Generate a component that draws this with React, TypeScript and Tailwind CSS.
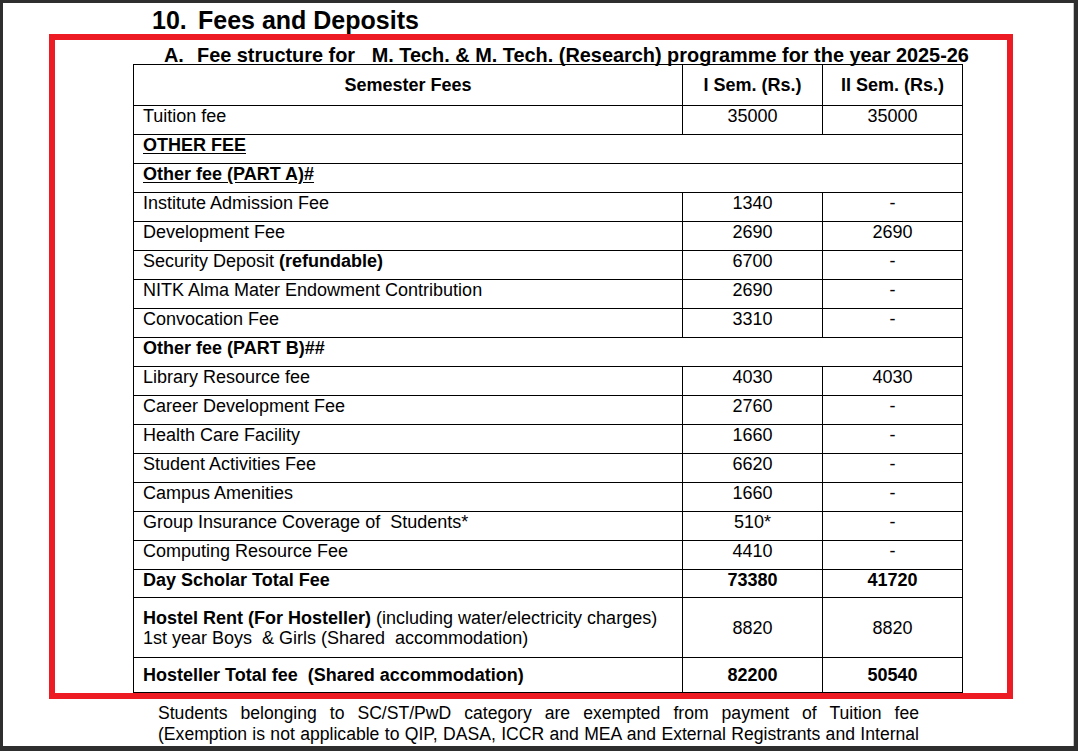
import React from "react";

type Row = {
  label: React.ReactNode;
  a?: string;
  b?: string;
  span?: boolean;
  h: string;
  center?: boolean;
  bold?: boolean;
};

const rows: Row[] = [
  { label: "Tuition fee", a: "35000", b: "35000", h: "h-[29px]" },
  { label: <span className="font-bold underline underline-offset-[2px]">OTHER FEE</span>, span: true, h: "h-[29px]" },
  { label: <span className="font-bold underline underline-offset-[2px]">Other fee (PART A)#</span>, span: true, h: "h-[29px]" },
  { label: "Institute Admission Fee", a: "1340", b: "-", h: "h-[29px]" },
  { label: "Development Fee", a: "2690", b: "2690", h: "h-[29px]" },
  {
    label: (
      <>
        Security Deposit <span className="font-bold">(refundable)</span>
      </>
    ),
    a: "6700",
    b: "-",
    h: "h-[29px]",
  },
  { label: "NITK Alma Mater Endowment Contribution", a: "2690", b: "-", h: "h-[29px]" },
  { label: "Convocation Fee", a: "3310", b: "-", h: "h-[29px]" },
  { label: <span className="font-bold">Other fee (PART B)##</span>, span: true, h: "h-[29px]" },
  { label: "Library Resource fee", a: "4030", b: "4030", h: "h-[29px]" },
  { label: "Career Development Fee", a: "2760", b: "-", h: "h-[29px]" },
  { label: "Health Care Facility", a: "1660", b: "-", h: "h-[29px]" },
  { label: "Student Activities Fee", a: "6620", b: "-", h: "h-[29px]" },
  { label: "Campus Amenities", a: "1660", b: "-", h: "h-[29px]" },
  { label: "Group Insurance Coverage of  Students*", a: "510*", b: "-", h: "h-[29px]" },
  { label: "Computing Resource Fee", a: "4410", b: "-", h: "h-[29px]" },
  { label: "Day Scholar Total Fee", a: "73380", b: "41720", h: "h-[28px]", bold: true },
  {
    label: (
      <>
        <span className="font-bold">Hostel Rent (For Hosteller)</span> (including water/electricity charges)
        <br />
        1st year Boys &nbsp;&amp; Girls (Shared &nbsp;accommodation)
      </>
    ),
    a: "8820",
    b: "8820",
    h: "h-[60px]",
    center: true,
  },
  {
    label: "Hosteller Total fee  (Shared accommodation)",
    a: "82200",
    b: "50540",
    h: "h-[35px]",
    center: true,
    bold: true,
  },
];

function TableRow({ r }: { r: Row }) {
  const align = r.center ? "items-center" : "items-start";
  if (r.span) {
    return (
      <div className={`flex ${r.h} border-b border-black ${align}`}>
        <div className="pl-[9px] leading-[20px] whitespace-pre">{r.label}</div>
      </div>
    );
  }
  return (
    <div className={`flex ${r.h} border-b border-black ${r.bold ? "font-bold" : ""}`}>
      <div className={`flex ${align} w-[549px] border-r border-black pl-[9px] leading-[20px] whitespace-pre`}>
        <div>{r.label}</div>
      </div>
      <div className={`flex ${align} justify-center w-[140px] border-r border-black leading-[20px]`}>
        {r.a}
      </div>
      <div className={`flex ${align} justify-center flex-1 leading-[20px]`}>{r.b}</div>
    </div>
  );
}

export default function App() {
  return (
    <div
      className="w-[1078px] h-[751px] bg-[#2e2e2e] pt-[3px] pl-[3px] overflow-hidden text-black"
      style={{ fontFamily: '"Liberation Sans", Arial, sans-serif' }}
    >
      <div className="w-[1071px] h-[743px] bg-white overflow-hidden border-r border-[#c4c4c4]">
        <div className="pl-[149px] pt-[3px] h-[31px] text-[25px] leading-[28px] font-bold whitespace-pre">
          <span className="inline-block w-[46px]">10.</span>Fees and Deposits
        </div>
        <div className="ml-[46px] w-[964px] h-[665px] border-[6px] border-[#ed1c24]">
          <div className="h-[24px] pt-[4px] pl-[109px] leading-[22px] text-[19.9px] font-bold whitespace-pre">
            <span className="inline-block w-[33px]">A.</span>Fee structure for   M. Tech. &amp; M. Tech. (Research) programme for the year 2025-26
          </div>
          <div className="ml-[78px] w-[830px] border-t border-l border-r border-black text-[18px]">
            <div className="flex h-[41px] border-b border-black font-bold">
              <div className="flex items-center justify-center w-[549px] border-r border-black leading-[20px]">
                Semester Fees
              </div>
              <div className="flex items-center justify-center w-[140px] border-r border-black leading-[20px]">
                I Sem. (Rs.)
              </div>
              <div className="flex items-center justify-center flex-1 leading-[20px]">II Sem. (Rs.)</div>
            </div>
            {rows.map((r, i) => (
              <TableRow key={i} r={r} />
            ))}
          </div>
        </div>
        <div className="ml-[155px] w-[761px] mt-[4px] text-[17.6px] leading-[20.7px]">
          <div className="text-justify [text-align-last:justify]">
            Students belonging to SC/ST/PwD category are exempted from payment of Tuition fee
          </div>
          <div className="text-justify [text-align-last:justify]">
            (Exemption is not applicable to QIP, DASA, ICCR and MEA and External Registrants and Internal
          </div>
        </div>
      </div>
    </div>
  );
}
